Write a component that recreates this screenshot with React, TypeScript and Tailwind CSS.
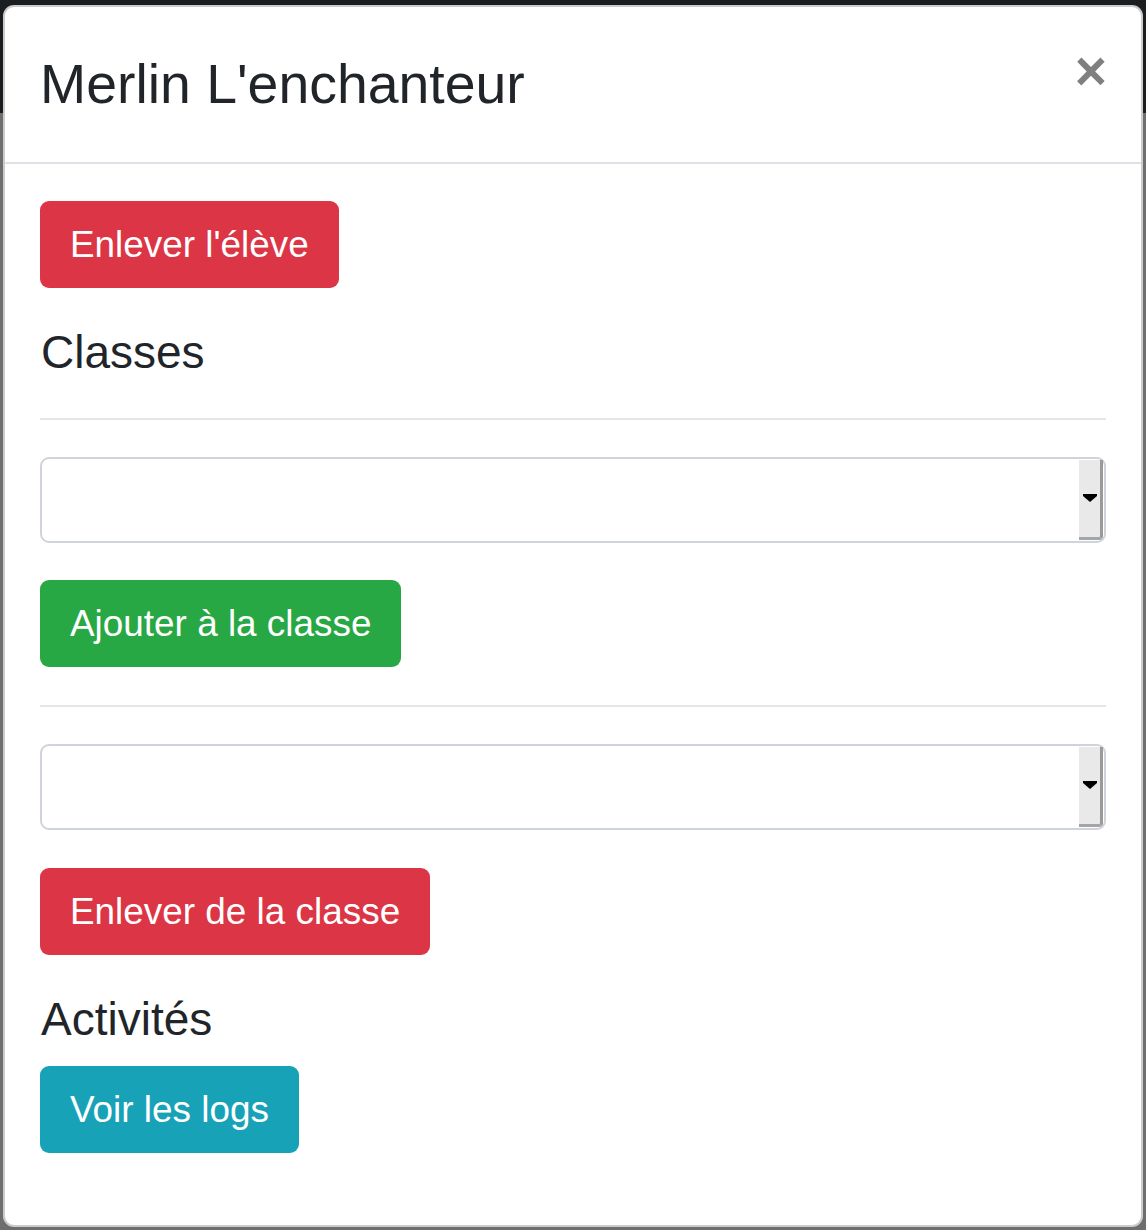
import React from "react";

const font = { fontFamily: '"Liberation Sans", Arial, sans-serif' };

function Btn({ children, color }: { children: React.ReactNode; color: string }) {
  return (
    <div className="flex">
      <button
        className={`h-[87px] px-[30px] rounded-[9px] text-white text-[36.9px] leading-[55px] flex items-center ${color}`}
      >
        {children}
      </button>
    </div>
  );
}

function Select() {
  return (
    <div className="relative h-[86px] w-full rounded-[9px] border-2 border-[#ced4da] bg-white">
      <div className="absolute right-[1px] top-[1px] bottom-[1px] w-[24px] bg-[#e9e9e9] border-r-[3px] border-b-[3px] border-r-[#9a9a9a] border-b-[#a5a5a5] rounded-br-[4px] flex items-center justify-center">
        <div className="flex flex-col items-center mt-[-2px]">
          <div className="w-[14px] h-[2px] bg-black" />
          <div className="w-0 h-0 border-l-[7px] border-r-[7px] border-t-[6px] border-l-transparent border-r-transparent border-t-black" />
        </div>
      </div>
    </div>
  );
}

export default function App() {
  return (
    <div
      className="w-[1146px] h-[1230px] overflow-hidden bg-[linear-gradient(to_bottom,#1b1e21_0px,#1b1e21_113px,#6e6e6e_113px)]"
      style={font}
    >
      <div className="ml-[3px] mt-[5px] w-[1140px] h-[1222px] bg-white rounded-[11px] border-2 border-black/20 text-[#212529] flex flex-col">
        <div className="flex items-start justify-between pl-[35px] pr-[34px] py-[36px] border-b-2 border-[#dee2e6]">
          <h4 className="text-[55.4px] leading-[82.8px] font-normal m-0">Merlin L'enchanteur</h4>
          <button className="text-[55.2px] leading-none font-bold text-black/50 mt-[1px]">×</button>
        </div>
        <div className="flex flex-col px-[35px] pt-[37px]">
          <Btn color="bg-[#dc3545]">Enlever l'élève</Btn>
          <h5 className="mt-[37px] text-[46px] leading-[55.2px] font-normal pl-[1px]">Classes</h5>
          <hr className="mt-[38px] mb-[37px] border-0 border-t-2 border-[#e5e5e5]" />
          <Select />
          <div className="mt-[37px]">
            <Btn color="bg-[#28a745]">Ajouter à la classe</Btn>
          </div>
          <hr className="mt-[38px] mb-[37px] border-0 border-t-2 border-[#e5e5e5]" />
          <Select />
          <div className="mt-[38px]">
            <Btn color="bg-[#dc3545]">Enlever de la classe</Btn>
          </div>
          <h5 className="mt-[37px] mb-[19px] text-[46px] leading-[55.2px] font-normal pl-[1px]">Activités</h5>
          <Btn color="bg-[#17a2b8]">Voir les logs</Btn>
        </div>
      </div>
    </div>
  );
}
